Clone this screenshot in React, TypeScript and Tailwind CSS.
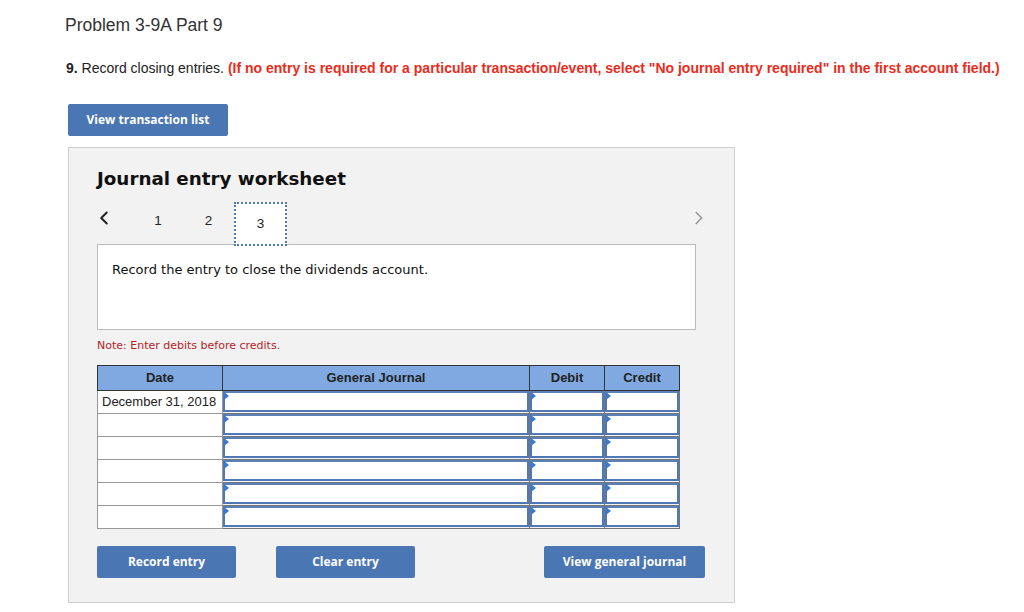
import { ChevronLeft, ChevronRight } from "lucide-react"

const rows = ["December 31, 2018", "", "", "", "", ""]

const InputCell = ({ w }: { w: string }) => (
  <td className={`${w} h-[23px] border border-[#777] p-0`}>
    <div className="relative h-[21px] bg-white border-2 border-[#4f79b6] border-t-[#5a80b8]">
      <span className="absolute left-[-1px] top-[-1px] h-0 w-0 border-y-[4px] border-l-[5px] border-y-transparent border-l-[#3b78d0]" />
    </div>
  </td>
)

const Btn = ({ label, w }: { label: string; w: string }) => (
  <button
    className={`${w} h-[32px] rounded-[2px] bg-[#4a76b4] text-[12px] font-bold text-white`}
    style={{ fontFamily: "'Open Sans', 'Liberation Sans', sans-serif" }}
  >
    {label}
  </button>
)

export default function App() {
  return (
    <div className="min-h-[612px] bg-white pl-[65px] pt-[14px] font-['Liberation_Sans',Arial,sans-serif] text-[#222]">
      <h1 className="text-[17.5px] text-[#333] leading-[22px]">Problem 3-9A Part 9</h1>
      <p className="mt-[24px] ml-[1px] text-[14px] leading-[17px]">
        <b>9.</b> Record closing entries.{" "}
        <b className="text-[#ea2b20]">
          (If no entry is required for a particular transaction/event, select "No journal entry required" in the first account field.)
        </b>
      </p>
      <div className="ml-[3px] mt-[27px]">
        <Btn label="View transaction list" w="w-[160px]" />
      </div>
      <div className="ml-[3px] mt-[11px] h-[456px] w-[667px] border border-[#cfcfcf] bg-[#f2f2f2] pl-[28px] pt-[19px] font-['DejaVu_Sans',Verdana,sans-serif]">
        <h2 className="text-[18.3px] font-bold leading-[24px] text-[#111]">Journal entry worksheet</h2>
        <div
          className="relative z-10 mt-[11px] flex h-[42px] w-[598px] items-start text-[13.5px]"
          style={{ fontFamily: "'Liberation Sans', Arial, sans-serif" }}
        >
          <div className="w-[16px]">
            <ChevronLeft className="ml-[-4px] mt-[5px] h-[22px] w-[22px] text-[#222]" strokeWidth={2.2} />
          </div>
          <span className="ml-[20px] mt-[9px] w-[50px] text-center">1</span>
          <span className="mt-[9px] w-[51px] text-center">2</span>
          <div className="flex h-[44px] w-[53px] items-center justify-center border-2 border-dotted border-[#4f79b6] bg-white">
            3
          </div>
          <ChevronRight className="ml-auto mr-[-15px] mt-[5px] h-[22px] w-[22px] text-[#999]" strokeWidth={1.8} />
        </div>
        <div className="h-[86px] w-[599px] border border-[#bbb] bg-white px-[14px] pt-[15px] text-[13px] text-[#111]">
          Record the entry to close the dividends account.
        </div>
        <p className="mt-[8px] text-[11px] text-[#b5241f]">Note: Enter debits before credits.</p>
        <table
          className="mt-[10px] w-[583px] border-collapse text-[13px]"
          style={{ fontFamily: "'Liberation Sans', Arial, sans-serif" }}
        >
          <thead>
            <tr className="h-[25px] bg-[#7fa9e0] font-bold text-[#222]">
              <th className="w-[125px] border border-[#333]">Date</th>
              <th className="w-[307px] border border-[#333]">General Journal</th>
              <th className="w-[75px] border border-[#333]">Debit</th>
              <th className="w-[75px] border border-[#333]">Credit</th>
            </tr>
          </thead>
          <tbody>
            {rows.map((d, i) => (
              <tr key={i}>
                <td className="h-[23px] w-[125px] border border-[#999] bg-white px-[4px] text-[#222]">{d}</td>
                <InputCell w="w-[307px]" />
                <InputCell w="w-[75px]" />
                <InputCell w="w-[75px]" />
              </tr>
            ))}
          </tbody>
        </table>
        <div className="mt-[17px] flex w-[608px] items-center">
          <Btn label="Record entry" w="w-[139px]" />
          <div className="ml-[40px]">
            <Btn label="Clear entry" w="w-[139px]" />
          </div>
          <div className="ml-auto">
            <Btn label="View general journal" w="w-[161px]" />
          </div>
        </div>
      </div>
    </div>
  )
}
